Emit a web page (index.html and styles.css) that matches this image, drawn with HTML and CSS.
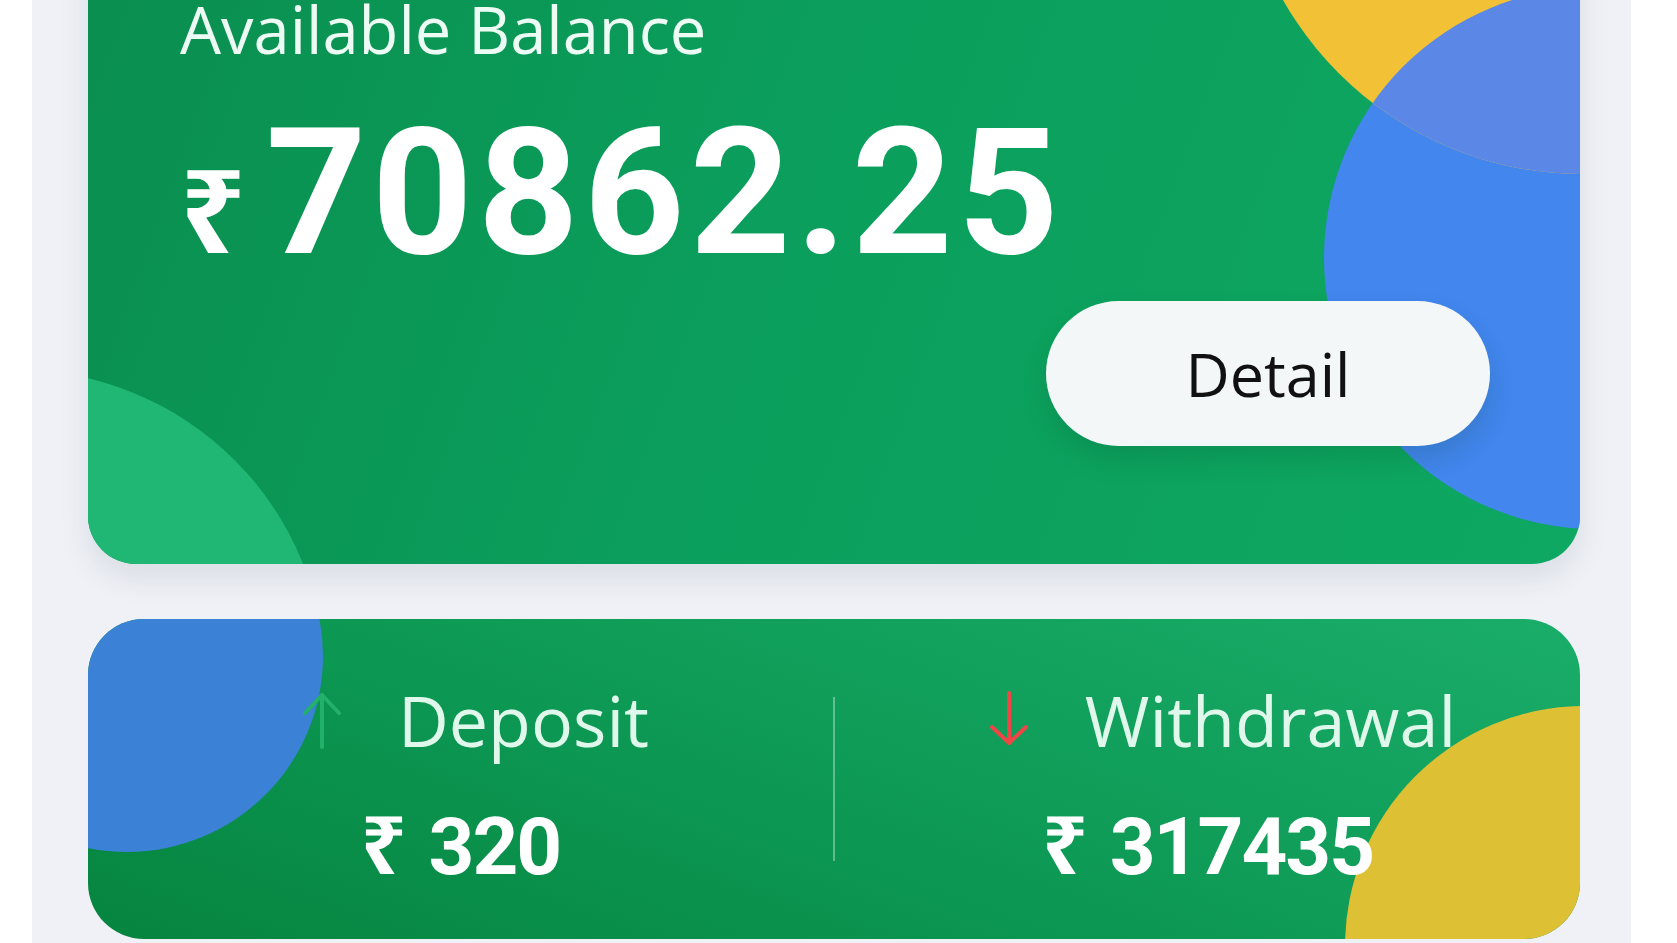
FILE: index.html
```html
<!DOCTYPE html>
<html lang="en">
<head>
  <meta charset="UTF-8">
  <meta name="viewport" content="width=device-width, initial-scale=1.0">
  <title>Wallet</title>
  <link rel="stylesheet" href="styles.css">
</head>
<body>
  <div class="screen">
    <section class="balance-card">
      <span class="blob blob-blue"></span>
      <span class="blob blob-yellow"><span class="blob-overlap"></span></span>
      <span class="blob blob-mint"></span>

      <p class="balance-label">Available Balance</p>
      <div class="balance-amount">
        <span class="rupee">₹</span><span class="value">70862.25</span>
      </div>
      <button class="detail-btn">Detail</button>
    </section>

    <section class="stats-card">
      <span class="blob blob-blue"></span>
      <span class="blob blob-yellow"></span>

      <div class="stat">
        <div class="stat-head">
          <svg class="arrow arrow-up" viewBox="0 0 40 58" width="40" height="58">
            <line x1="20" y1="4" x2="20" y2="56"/>
            <polyline points="3,22 20,4 37,22"/>
          </svg>
          <span>Deposit</span>
        </div>
        <div class="stat-amount"><span class="rupee">₹</span>320</div>
      </div>

      <div class="divider"></div>

      <div class="stat">
        <div class="stat-head">
          <svg class="arrow arrow-down" viewBox="0 0 40 58" width="40" height="58">
            <line x1="20" y1="2" x2="20" y2="52"/>
            <polyline points="3,36 20,52 37,36"/>
          </svg>
          <span>Withdrawal</span>
        </div>
        <div class="stat-amount"><span class="rupee">₹</span>317435</div>
      </div>
    </section>
  </div>
</body>
</html>
```

FILE: styles.css
```css
* {
  box-sizing: border-box;
}
body {
  margin: 0;
  background: #fff;
  font-family: 'Open Sans', sans-serif;
}
.screen {
  margin-left: 32px;
  width: 1599px;
  height: 943px;
  padding: 0 51px 0 56px;
  background: #eff1f6;
  overflow: hidden;
}
.blob {
  position: absolute;
  border-radius: 50%;
}

/* balance card */
.balance-card {
  position: relative;
  margin-top: -80px;
  height: 644px;
  padding: 69px 90px 0 92px;
  border-radius: 48px;
  overflow: hidden;
  display: flex;
  flex-direction: column;
  background: linear-gradient(110deg, #0a8e4f 0%, #0b9e5c 45%, #0ea862 100%);
  box-shadow: 0 14px 30px rgba(40, 50, 90, 0.10);
}
.balance-card .blob-blue {
  left: 1236px;
  top: 67px;
  width: 542px;
  height: 542px;
  background: #4286ee;
}
.balance-card .blob-yellow {
  left: 1150px;
  top: -434px;
  width: 688px;
  height: 688px;
  background: #f3c136;
  overflow: hidden;
}
.blob-overlap {
  position: absolute;
  left: 86px;
  top: 501px;
  width: 542px;
  height: 542px;
  border-radius: 50%;
  background: #5b88e6;
}
.balance-card .blob-mint {
  left: -379px;
  top: 450px;
  width: 616px;
  height: 616px;
  background: #20b673;
}
.balance-label {
  position: relative;
  margin: 0;
  font-size: 65px;
  line-height: 80px;
  color: #ecfbf3;
}
.balance-amount {
  position: relative;
  margin-top: 36px;
  display: flex;
  align-items: baseline;
  color: #fff;
  line-height: 176px;
  height: 176px;
}
.balance-amount .rupee {
  font-family: 'Noto Sans', sans-serif;
  font-weight: 700;
  font-size: 115px;
  margin-right: 20px;
}
.balance-amount .value {
  font-family: Roboto, sans-serif;
  font-weight: 700;
  font-size: 176px;
  letter-spacing: 5px;
}
.detail-btn {
  position: relative;
  align-self: flex-end;
  margin-top: 20px;
  width: 444px;
  height: 145px;
  border: none;
  border-radius: 73px;
  background: #f4f7f8;
  color: #111;
  font-family: 'Open Sans', sans-serif;
  font-size: 61px;
  font-weight: 500;
  box-shadow: 0 14px 26px rgba(0, 60, 30, 0.16);
}

/* deposit / withdrawal card */
.stats-card {
  position: relative;
  margin-top: 55px;
  height: 320px;
  padding-top: 9px;
  border-radius: 56px;
  overflow: hidden;
  display: grid;
  grid-template-columns: 1fr 2px 1fr;
  align-items: center;
  background: linear-gradient(20deg, #06843f 0%, #0c9853 45%, #1aad6a 100%);
}
.stats-card .blob-blue {
  left: -157px;
  top: -159px;
  width: 392px;
  height: 392px;
  background: #3b82d6;
}
.stats-card .blob-yellow {
  left: 1257px;
  top: 87px;
  width: 480px;
  height: 480px;
  background: #ddc034;
}
.stat {
  position: relative;
  display: flex;
  flex-direction: column;
  align-items: center;
}
.stat-head {
  display: flex;
  align-items: center;
  gap: 56px;
  padding-left: 30px;
  font-size: 70px;
  line-height: 80px;
  color: #e0f8ec;
}
.arrow {
  fill: none;
  stroke-width: 4;
  stroke-linecap: round;
  stroke-linejoin: round;
}
.arrow-up {
  stroke: #22b06a;
}
.arrow-down {
  stroke: #ee4646;
}
.stat-amount {
  margin-top: 43px;
  font-family: Roboto, sans-serif;
  font-weight: 700;
  font-size: 80px;
  line-height: 80px;
  letter-spacing: -2px;
  color: #fff;
}
.stat-amount .rupee {
  font-family: 'Noto Sans', sans-serif;
  margin-right: 24px;
}
.divider {
  position: relative;
  height: 164px;
  margin-top: -9px;
  background: rgba(255, 255, 255, 0.35);
}
```
